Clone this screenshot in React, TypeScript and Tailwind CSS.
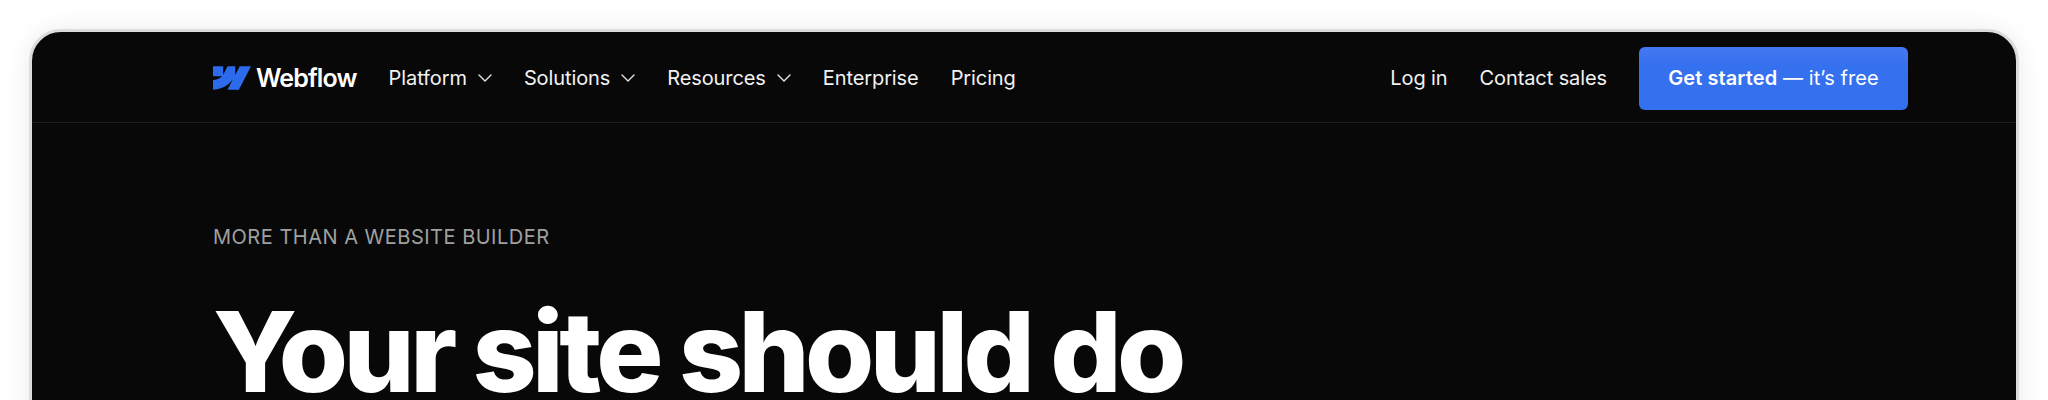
import { ChevronDown } from 'lucide-react';

function NavItem({ label, menu }: { label: string; menu?: boolean }) {
  return (
    <a className="flex items-center gap-[6px] text-[20px] leading-[24px] tracking-[-0.005em] text-[#f2f2f2] whitespace-nowrap">
      {label}
      {menu && <ChevronDown className="-mr-[5px] h-[24px] w-[24px] text-[#e5e5e5]" strokeWidth={1.4} />}
    </a>
  );
}

export default function App() {
  return (
    <div className="h-[400px] overflow-hidden bg-white px-[29px] pt-[29px] font-['Inter',sans-serif]">
      <div className="h-[420px] rounded-t-[32px] border-[3px] border-[#dcdcdc] bg-[#080808] shadow-[0_0_24px_rgba(0,0,0,0.08)]">
        {/* Nav */}
        <header className="flex h-[91px] items-center justify-between border-b border-[#1e1e1e] pl-[181px] pr-[108px] pt-[2px]">
          <div className="flex items-center gap-[32px]">
            <div className="flex items-center gap-[5px]">
              <svg viewBox="0 4.5 24 15" className="h-[24px] w-[38px] fill-[#2d6bed]">
                <path d="M24 4.515l-7.658 14.97H9.149l3.205-6.204h-.144C9.566 16.713 5.621 18.973 0 19.485v-6.118s3.596-.213 5.71-2.435H0V4.515h6.417v5.278l.144-.001 2.622-5.277h4.854v5.244h.144l2.72-5.244H24z" />
              </svg>
              <span className="text-[25px] font-semibold leading-[28px] tracking-[-0.035em] text-white">Webflow</span>
            </div>
            <NavItem label="Platform" menu />
            <NavItem label="Solutions" menu />
            <NavItem label="Resources" menu />
            <NavItem label="Enterprise" />
            <NavItem label="Pricing" />
          </div>
          <div className="flex items-center gap-[32px]">
            <NavItem label="Log in" />
            <NavItem label="Contact sales" />
            <button className="flex h-[63px] w-[269px] items-center justify-center rounded-[6px] bg-[#3570ef] bg-gradient-to-b from-[#4479f0] to-[#3570ef] to-30% text-[20px] tracking-[0.005em] text-white">
              <span className="font-semibold">Get started</span>
              <span>&nbsp;— it’s free</span>
            </button>
          </div>
        </header>

        {/* Hero */}
        <main className="pl-[181px] pt-[102px]">
          <p className="text-[20px] leading-[24px] tracking-[0.025em] text-[#a0a0a0]">MORE THAN A WEBSITE BUILDER</p>
          <h1 className="mt-[37px] text-[112px] font-extrabold leading-[130px] tracking-[-0.041em] text-white whitespace-nowrap">
            Your site should do
          </h1>
        </main>
      </div>
    </div>
  );
}
